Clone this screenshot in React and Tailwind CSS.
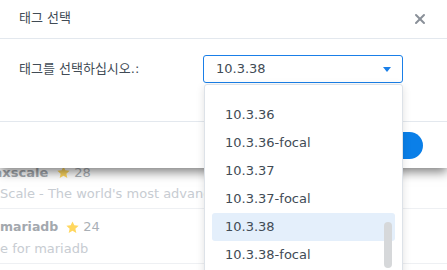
import React from "react";
import { X } from "lucide-react";

const versions = ["10.3.36", "10.3.36-focal", "10.3.37", "10.3.37-focal", "10.3.38", "10.3.38-focal"];

function Star() {
  return (
    <svg width="15" height="15" viewBox="0 0 24 24" className="shrink-0">
      <path
        d="M12 2.2l2.9 6.3 6.9.7-5.2 4.6 1.5 6.8L12 17.1l-6.1 3.5 1.5-6.8-5.2-4.6 6.9-.7z"
        fill="#ffd75e"
      />
    </svg>
  );
}

export default function App() {
  const selected = "10.3.38";

  return (
    <div
      className="relative w-[447px] h-[270px] overflow-hidden bg-white text-[#414b55]"
      style={{ fontFamily: '"DejaVu Sans", "Noto Sans CJK KR", sans-serif' }}
    >
      {/* dialog */}
      <div className="relative z-10 bg-white shadow-[0_4px_10px_rgba(0,0,0,0.5)]">
        <div className="h-[39px] flex items-center justify-between pl-[19px] pr-[19px] border-b border-[#e3e8ee]">
          <span className="text-[13px] -mt-[3px]">태그 선택</span>
          <X size={16} strokeWidth={3} className="text-[#8a9099] -mt-[1px]" />
        </div>
        <div className="h-[83px] flex items-start pt-[16px] pl-[19px] border-b border-[#e3e8ee]">
          <div className="w-[184px] h-[28px] flex items-center text-[13px]">태그를 선택하십시오.:</div>
          <div className="relative w-[200px]">
            <div className="h-[28px] flex items-center justify-between pl-[12px] pr-[11px] border border-[#1a7fe8] rounded-[3px] text-[13px]">
              <span>{selected}</span>
              <svg width="8" height="5" viewBox="0 0 8 5">
                <path d="M0 0h8L4 5z" fill="#1a7fe8" />
              </svg>
            </div>
          </div>
        </div>
        <div className="h-[46px] flex items-center justify-end pr-[24px]">
          <button className="w-[80px] h-[27px] rounded-full bg-[#0a7fe8] text-white text-[13px]">확인</button>
        </div>
      </div>

      {/* page behind the dialog */}
      <div className="-mt-[13px] text-[13px] overflow-hidden">
        <div className="h-[54px] border-b border-[#eef0f3] flex flex-col justify-center pt-[4px]">
          <div className="flex items-center gap-[8px] h-[20px] -ml-[20px]">
            <span className="font-bold text-[#a3a8ae]">maxscale</span>
            <div className="flex items-center gap-[3px]">
              <Star />
              <span className="text-[#aab0b6]">28</span>
            </div>
          </div>
          <div className="h-[22px] flex items-center text-[#c7ccd2] whitespace-nowrap">Scale - The world's most advanced database proxy</div>
        </div>
        <div className="h-[55px] border-b border-[#eef0f3] flex flex-col justify-center pt-[4px]">
          <div className="flex items-center gap-[7px] h-[22px]">
            <span className="font-bold text-[#a3a8ae] text-[12.5px]">mariadb</span>
            <div className="flex items-center gap-[3px]">
              <Star />
              <span className="text-[#aab0b6]">24</span>
            </div>
          </div>
          <div className="h-[22px] flex items-center text-[#c7ccd2]">e for mariadb</div>
        </div>
      </div>

      {/* open dropdown */}
      <div className="absolute z-20 left-[204px] top-[84px] w-[199px] h-[200px] bg-white border border-[#dde2e8] rounded-t-[3px] shadow-[0_2px_8px_rgba(0,0,0,0.12)]">
        <div className="pt-[16px] px-[7px]">
          {versions.map((v) => (
            <div
              key={v}
              className={`h-[28px] flex items-center pl-[13px] rounded-[3px] text-[13px] ${v === selected ? "bg-[#e4effb]" : ""}`}
            >
              {v}
            </div>
          ))}
        </div>
        <div className="absolute left-[179px] top-[137px] w-[8px] h-[46px] rounded-full bg-[#d6d8da]" />
      </div>
    </div>
  );
}
